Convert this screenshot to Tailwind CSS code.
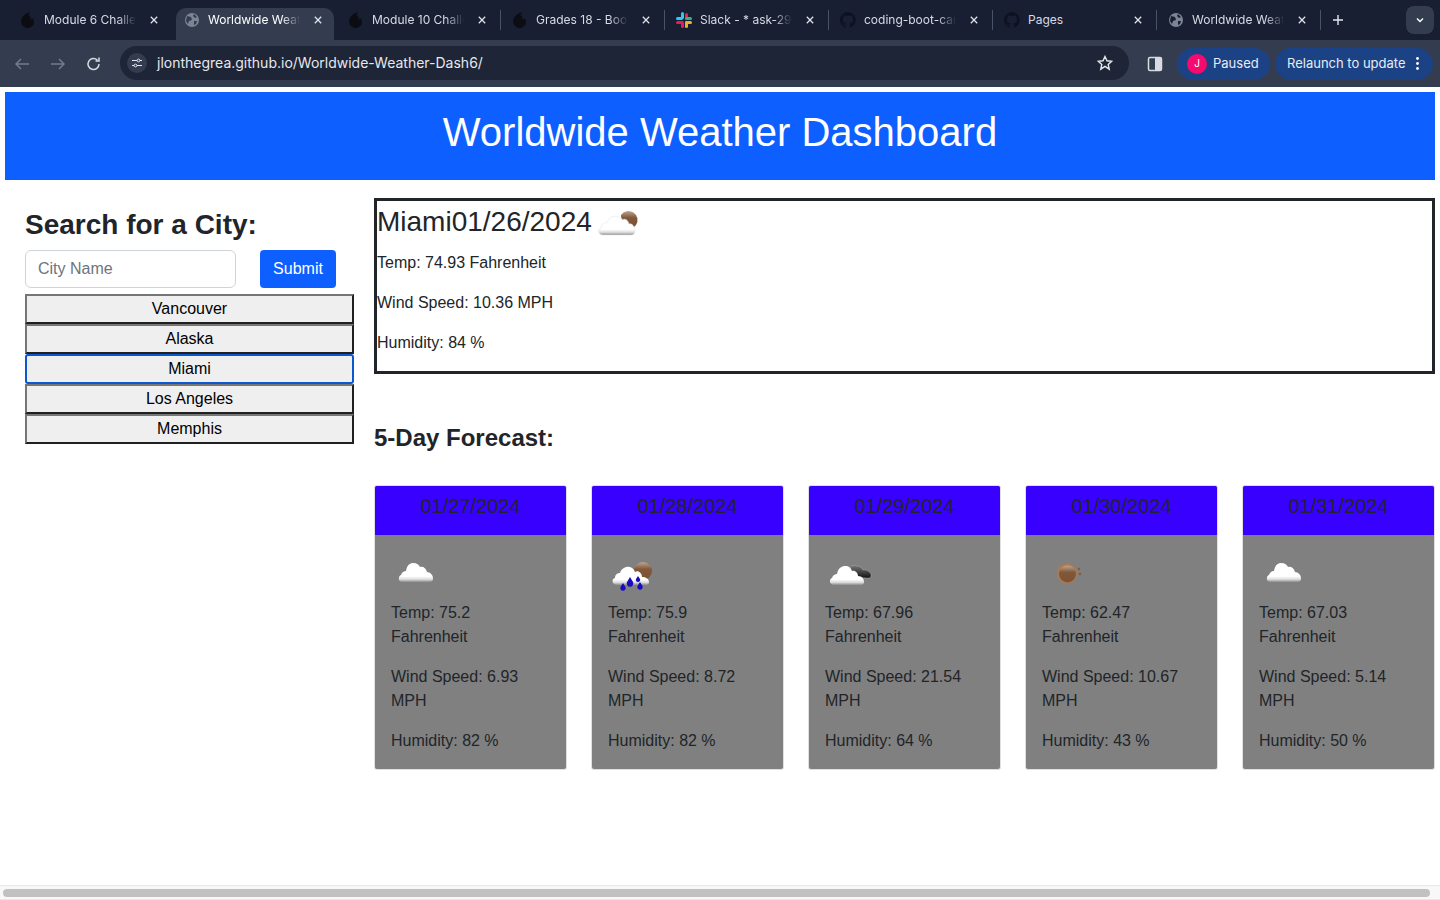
<!DOCTYPE html>
<html lang="en">
<head>
<meta charset="utf-8">
<title>Worldwide Weather Dashboard</title>
<script src="https://cdn.jsdelivr.net/npm/@tailwindcss/browser@4"></script>
</head>
<body class="bg-white h-screen overflow-hidden font-['Liberation_Sans',Arial,sans-serif] text-[#212529] text-base">
<svg class="absolute w-0 h-0" aria-hidden="true">
  <defs>
    <linearGradient id="cl" x1="0" y1="0" x2="0" y2="1"><stop offset="0" stop-color="#fff"/><stop offset=".7" stop-color="#fff"/><stop offset=".86" stop-color="#dcdcdc"/><stop offset="1" stop-color="#8d8d8d"/></linearGradient>
    <linearGradient id="sn" x1="0" y1="0" x2="0" y2="1"><stop offset="0" stop-color="#c0a58e"/><stop offset=".4" stop-color="#80583a"/><stop offset="1" stop-color="#7c5232"/></linearGradient>
    <linearGradient id="dk" x1="0" y1="0" x2="0" y2="1"><stop offset="0" stop-color="#777"/><stop offset=".6" stop-color="#3c3c3c"/><stop offset="1" stop-color="#111"/></linearGradient>
    <symbol id="cloud" viewBox="0 0 50 50"><path fill="url(#cl)" d="M11 31C7 31 7 25 10 24C11 21 13 20 15 20C16 14 19 12 22 12C26 12 28 14 29 16C32 15 35 17 36 21C39 21 42 24 42 27C42 30 41 31 38 31Z"/></symbol>
    <symbol id="ucf" viewBox="0 0 16 16"><path fill="#0b0d12" d="M10 0C6 1 2 4 1 9c0 3 2 6 6 7 3 0 7-2 7-6 0-2-1-3-2-4l-1 2-1-2 1-2-2 1 1-2-2 1Z"/></symbol>
    <symbol id="gh" viewBox="0 0 16 16"><path fill="#0e1220" d="M8 0a8 8 0 0 0-2.500 15.600c.4.100.5-.2.5-.4v-1.400c-2.200.5-2.700-1-2.700-1-.4-.9-.9-1.200-.9-1.200-.7-.5.1-.5.1-.5.8.1 1.200.8 1.200.8.7 1.200 1.900.9 2.300.7.1-.5.3-.9.5-1.100-1.800-.2-3.600-.9-3.600-4 0-.9.3-1.600.8-2.100-.1-.2-.4-1 .1-2.100 0 0 .7-.2 2.200.8a7.600 7.600 0 0 1 4 0c1.500-1 2.200-.8 2.200-.8.4 1.100.2 1.900.1 2.100.5.6.8 1.300.8 2.100 0 3.100-1.900 3.700-3.600 3.900.3.3.5.8.5 1.500v2.200c0 .2.1.5.5.4A8 8 0 0 0 8 0Z"/></symbol>
    <symbol id="x" viewBox="0 0 8 8"><path d="M.8.800l6.400 6.400M7.200.800L.8 7.200" stroke="#dfe2e8" stroke-width="1.300"/></symbol>
  </defs>
</svg>

<header class="h-[87px] bg-[#343c50] font-['Inter',sans-serif] text-white">
  <div class="h-10 bg-[#181f33] flex items-end pl-2 relative">
    <div class="w-[164px] h-8 pb-2 flex items-center pl-3 pr-[14px] shrink-0 text-xs text-[#d7dbe3]">
      <svg class="w-4 h-4 shrink-0 mr-2"><use href="#ucf"/></svg>
      <span class="w-[92px] overflow-hidden whitespace-nowrap [mask-image:linear-gradient(to_right,black_80%,transparent)]">Module 6 Challenge</span>
      <svg class="ml-auto w-2 h-2"><use href="#x"/></svg>
    </div>
    <div class="w-[158px] h-8 pb-2 ml-[4px] mr-[2px] flex items-center pl-2 pr-[12px] shrink-0 text-xs text-white bg-[#343c50] rounded-t-[10px]">
      <svg class="w-4 h-4 shrink-0 mr-2" viewBox="0 0 16 16"><circle cx="8" cy="8" r="7" fill="#7d8493"/><path fill="#343c50" d="M3 4l4 1 1 3-3 1-1 3-2-3ZM10 2l3 3-2 1-2-2ZM10 9l3 0-1 3-2 1Z"/></svg>
      <span class="w-[92px] overflow-hidden whitespace-nowrap [mask-image:linear-gradient(to_right,black_80%,transparent)]">Worldwide Weather</span>
      <svg class="ml-auto w-2 h-2"><use href="#x"/></svg>
    </div>
    <div class="w-[164px] h-8 pb-2 flex items-center pl-3 pr-[14px] shrink-0 text-xs text-[#d7dbe3]">
      <svg class="w-4 h-4 shrink-0 mr-2"><use href="#ucf"/></svg>
      <span class="w-[92px] overflow-hidden whitespace-nowrap [mask-image:linear-gradient(to_right,black_80%,transparent)]">Module 10 Challenge</span>
      <svg class="ml-auto w-2 h-2"><use href="#x"/></svg>
    </div>
    <div class="w-[164px] h-8 pb-2 flex items-center pl-3 pr-[14px] shrink-0 text-xs text-[#d7dbe3] relative before:absolute before:left-0 before:top-[2px] before:h-5 before:w-px before:bg-[#4a5266]">
      <svg class="w-4 h-4 shrink-0 mr-2"><use href="#ucf"/></svg>
      <span class="w-[92px] overflow-hidden whitespace-nowrap [mask-image:linear-gradient(to_right,black_80%,transparent)]">Grades 18 - Boot</span>
      <svg class="ml-auto w-2 h-2"><use href="#x"/></svg>
    </div>
    <div class="w-[164px] h-8 pb-2 flex items-center pl-3 pr-[14px] shrink-0 text-xs text-[#d7dbe3] relative before:absolute before:left-0 before:top-[2px] before:h-5 before:w-px before:bg-[#4a5266]">
      <svg class="w-4 h-4 shrink-0 mr-2" viewBox="0 0 16 16"><rect x="5" y="0" width="3" height="7" rx="1.500" fill="#36c5f0"/><rect x="0" y="5" width="7" height="3" rx="1.500" fill="#36c5f0"/><rect x="9" y="1" width="3" height="7" rx="1.500" fill="#f01e4a"/><rect x="9" y="5" width="7" height="3" rx="1.500" fill="#2eb67d"/><rect x="9" y="9" width="3" height="7" rx="1.500" fill="#ecb22e"/><rect x="9" y="9" width="7" height="3" rx="1.500" fill="#ecb22e"/><rect x="5" y="9" width="3" height="7" rx="1.500" fill="#e01e5a"/><rect x="0" y="9" width="7" height="3" rx="1.500" fill="#e01e5a"/></svg>
      <span class="w-[92px] overflow-hidden whitespace-nowrap [mask-image:linear-gradient(to_right,black_80%,transparent)]">Slack - * ask-29 -</span>
      <svg class="ml-auto w-2 h-2"><use href="#x"/></svg>
    </div>
    <div class="w-[164px] h-8 pb-2 flex items-center pl-3 pr-[14px] shrink-0 text-xs text-[#d7dbe3] relative before:absolute before:left-0 before:top-[2px] before:h-5 before:w-px before:bg-[#4a5266]">
      <svg class="w-4 h-4 shrink-0 mr-2"><use href="#gh"/></svg>
      <span class="w-[92px] overflow-hidden whitespace-nowrap [mask-image:linear-gradient(to_right,black_80%,transparent)]">coding-boot-camp</span>
      <svg class="ml-auto w-2 h-2"><use href="#x"/></svg>
    </div>
    <div class="w-[164px] h-8 pb-2 flex items-center pl-3 pr-[14px] shrink-0 text-xs text-[#d7dbe3] relative before:absolute before:left-0 before:top-[2px] before:h-5 before:w-px before:bg-[#4a5266]">
      <svg class="w-4 h-4 shrink-0 mr-2"><use href="#gh"/></svg>
      <span class="w-[92px] overflow-hidden whitespace-nowrap">Pages</span>
      <svg class="ml-auto w-2 h-2"><use href="#x"/></svg>
    </div>
    <div class="w-[164px] h-8 pb-2 flex items-center pl-3 pr-[14px] shrink-0 text-xs text-[#d7dbe3] relative before:absolute before:left-0 before:top-[2px] before:h-5 before:w-px before:bg-[#4a5266]">
      <svg class="w-4 h-4 shrink-0 mr-2" viewBox="0 0 16 16"><circle cx="8" cy="8" r="7" fill="#7d8493"/><path fill="#181f33" d="M3 4l4 1 1 3-3 1-1 3-2-3ZM10 2l3 3-2 1-2-2ZM10 9l3 0-1 3-2 1Z"/></svg>
      <span class="w-[92px] overflow-hidden whitespace-nowrap [mask-image:linear-gradient(to_right,black_80%,transparent)]">Worldwide Weather</span>
      <svg class="ml-auto w-2 h-2"><use href="#x"/></svg>
    </div>
    <div class="h-8 pb-2 w-9 flex items-center justify-center relative before:absolute before:left-0 before:top-[2px] before:h-5 before:w-px before:bg-[#4a5266]">
      <svg class="w-3 h-3" viewBox="0 0 12 12"><path d="M6 1v10M1 6h10" stroke="#e3e6ec" stroke-width="1.400"/></svg>
    </div>
    <div class="ml-auto mr-[6px] mb-[6px] w-7 h-7 rounded-lg bg-[#343c50] flex items-center justify-center">
      <svg class="w-2.5 h-2.5" viewBox="0 0 10 10"><path d="M2 3.500l3 3 3-3" fill="none" stroke="#fff" stroke-width="1.400"/></svg>
    </div>
  </div>
  <div class="h-[47px] flex items-center pl-[5px] pr-[7px]">
    <svg class="w-[34px] h-4" viewBox="0 0 34 16"><path d="M24 8H11M16 3l-5 5 5 5" fill="none" stroke="#727a8c" stroke-width="1.500"/></svg>
    <svg class="w-[34px] h-4 ml-[2px]" viewBox="0 0 34 16"><path d="M10 8h13M18 3l5 5-5 5" fill="none" stroke="#727a8c" stroke-width="1.500"/></svg>
    <svg class="w-[36px] h-4 ml-px" viewBox="0 0 36 16"><path d="M23 8a5.500 5.500 0 1 1-1.700-4M23 1.500V5h-3.500" fill="none" stroke="#d8dbe2" stroke-width="1.500"/></svg>
    <div class="ml-[8px] w-[1009px] h-[34px] rounded-full bg-[#1d2536] flex items-center pl-[7px] pr-[16px] -mt-px">
      <span class="w-5 h-5 rounded-full bg-[#343c50] flex items-center justify-center shrink-0">
        <svg class="w-3 h-3" viewBox="0 0 12 12"><path d="M1 3.500h5M9 3.500h2M1 8.500h2M6 8.500h5" stroke="#e6e8ee" stroke-width="1.100"/><circle cx="7.500" cy="3.500" r="1.400" fill="none" stroke="#e6e8ee"/><circle cx="4.500" cy="8.500" r="1.400" fill="none" stroke="#e6e8ee"/></svg>
      </span>
      <span class="ml-[10px] text-sm text-[#e6e8ee]">jlonthegrea.github.io/Worldwide-Weather-Dash6/</span>
      <svg class="ml-auto w-4 h-4" viewBox="0 0 16 16"><path d="M8 1.500l2 4.300 4.700.5-3.500 3.200 1 4.600L8 11.300l-4.200 2.800 1-4.600L1.300 6.300 6 5.800Z" fill="none" stroke="#e6e8ee" stroke-width="1.400"/></svg>
    </div>
    <svg class="ml-[18px] w-4 h-4" viewBox="0 0 16 16"><rect x="1.500" y="1.500" width="13" height="13" rx="1.500" fill="none" stroke="#d8dbe2" stroke-width="1.500"/><rect x="8" y="2" width="6" height="12" fill="#d8dbe2"/></svg>
    <div class="ml-[14px] w-[93px] h-8 rounded-full bg-[#1b4284] flex items-center pl-[10px] text-[13px] text-[#e6ecf7]">
      <span class="w-5 h-5 rounded-full bg-[#f50a6e] flex items-center justify-center text-[10px] text-white mr-[6px]">J</span>Paused
    </div>
    <div class="ml-[5px] w-[158px] h-8 rounded-full bg-[#1b4284] flex items-center pl-3 text-[13px] text-[#e6ecf7] whitespace-nowrap">
      Relaunch to update
      <svg class="ml-[10px] w-[3px] h-[13px]" viewBox="0 0 3 13"><circle cx="1.500" cy="1.500" r="1.400" fill="#fff"/><circle cx="1.500" cy="6.500" r="1.400" fill="#fff"/><circle cx="1.500" cy="11.500" r="1.400" fill="#fff"/></svg>
    </div>
  </div>
</header>

<div class="h-[798px] px-[5px] pt-[5px] relative">
  <div class="h-[88px] pb-2 bg-[#0d60ff] flex items-center justify-center">
    <h1 class="text-[40px] leading-[48px] text-white">Worldwide Weather Dashboard</h1>
  </div>

  <main class="flex mt-[18px] gap-5">
    <aside class="w-[349px] shrink-0 pl-5 pt-[10px]">
      <h2 class="text-[28px] leading-[34px] font-bold mb-2">Search for a City:</h2>
      <form class="flex gap-6">
        <input class="w-[211px] h-[38px] px-3 border border-[#ced4da] rounded-md text-base placeholder:text-[#6c757d]" placeholder="City Name">
        <button type="button" class="w-[76px] h-[38px] rounded-[4px] bg-[#0d60ff] text-white text-base">Submit</button>
      </form>
      <div class="mt-[6px] flex flex-col">
        <button class="h-[30px] bg-[#efefef] border-2 border-t-[#767676] border-l-[#767676] border-r-[#202020] border-b-[#202020] text-black">Vancouver</button>
        <button class="h-[30px] bg-[#efefef] border-2 border-t-[#767676] border-l-[#767676] border-r-[#202020] border-b-[#202020] text-black">Alaska</button>
        <button class="h-[30px] bg-[#efefef] border-2 border-[#0b57d0] rounded-[3px] text-black">Miami</button>
        <button class="h-[30px] bg-[#efefef] border-2 border-t-[#767676] border-l-[#767676] border-r-[#202020] border-b-[#202020] text-black">Los Angeles</button>
        <button class="h-[30px] bg-[#efefef] border-2 border-t-[#767676] border-l-[#767676] border-r-[#202020] border-b-[#202020] text-black">Memphis</button>
      </div>
    </aside>

    <section class="w-[1061px]">
      <div class="h-[176px] border-[3px] border-[#212529]">
        <div class="flex h-[50px] pt-px">
          <h2 class="text-[28px] leading-[40px] whitespace-nowrap">Miami01/26/2024</h2>
          <svg class="w-[50px] h-[50px] -mt-[1px] ml-[2px]" viewBox="0 0 50 50">
            <path fill="url(#sn)" d="M27 14a9 9 0 0 1 15 10l-3 3-9-5-3-6Z"/>
            <path fill="url(#cl)" stroke="#e4e4e4" stroke-width=".6" d="M9 34C4 34 3 28 7 27C7 23 11 21 13 22C15 14 24 13 28 19C31 17 34 19 35 23C38 22 41 26 41 30C41 33 39 34 37 34Z"/>
          </svg>
        </div>
        <p class="leading-6 mb-4">Temp: 74.93 Fahrenheit</p>
        <p class="leading-6 mb-4">Wind Speed: 10.36 MPH</p>
        <p class="leading-6">Humidity: 84 %</p>
      </div>

      <h3 class="mt-[49px] text-2xl leading-[29px] font-bold">5-Day Forecast:</h3>

      <div class="flex gap-6 mt-[33px]">
        <article class="w-[193px] h-[285px] border border-[#e0e0e0] rounded-[3px] overflow-hidden bg-[#808080]">
          <div class="h-[49px] bg-[#3700ff] pt-2 text-center text-xl leading-6">01/27/2024</div>
          <div class="px-4 pt-4">
            <svg class="w-[50px] h-[50px]" viewBox="0 0 50 50"><use href="#cloud" width="50" height="50"/></svg>
            <p class="leading-6 mb-4">Temp: 75.2 Fahrenheit</p>
            <p class="leading-6 mb-4">Wind Speed: 6.93 MPH</p>
            <p class="leading-6">Humidity: 82 %</p>
          </div>
        </article>
        <article class="w-[193px] h-[285px] border border-[#e0e0e0] rounded-[3px] overflow-hidden bg-[#808080]">
          <div class="h-[49px] bg-[#3700ff] pt-2 text-center text-xl leading-6">01/28/2024</div>
          <div class="px-4 pt-4">
            <svg class="w-[50px] h-[50px]" viewBox="0 0 50 50">
              <circle cx="35" cy="20" r="9" fill="url(#sn)"/>
              <path fill="url(#cl)" d="M9 34C4 34 3 28 7 27C7 23 10 22 12 22C14 15 24 13 27 21C30 19 34 22 34 26C38 26 41 28 41 31C41 33 40 34 38 34Z"/>
              <path fill="#1a0ac0" d="M15 32l2.500 4a2.700 2.700 0 1 1-5 0ZM22 26l3 5a3.300 3.300 0 1 1-6 0ZM30 25l2 3a2.200 2.200 0 1 1-4 0ZM32 31l2.500 4a2.700 2.700 0 1 1-5 0Z"/>
            </svg>
            <p class="leading-6 mb-4">Temp: 75.9 Fahrenheit</p>
            <p class="leading-6 mb-4">Wind Speed: 8.72 MPH</p>
            <p class="leading-6">Humidity: 82 %</p>
          </div>
        </article>
        <article class="w-[193px] h-[285px] border border-[#e0e0e0] rounded-[3px] overflow-hidden bg-[#808080]">
          <div class="h-[49px] bg-[#3700ff] pt-2 text-center text-xl leading-6">01/29/2024</div>
          <div class="px-4 pt-4">
            <svg class="w-[50px] h-[50px]" viewBox="0 0 50 50">
              <path fill="url(#dk)" stroke="#bbb" stroke-width=".4" d="M24 21C24 16 28 13 32 15C35 15 37 17 38 19C42 18 47 22 46 25C46 27 44 27 42 27L29 26Z"/>
              <path fill="url(#cl)" d="M9 34C4 34 4 28 7 27C8 24 10 23 12 23C13 17 17 15 20 15C24 15 26 17 27 20C30 19 33 22 33 25C37 25 39 28 39 31C39 33 38 34 36 34Z"/>
            </svg>
            <p class="leading-6 mb-4">Temp: 67.96 Fahrenheit</p>
            <p class="leading-6 mb-4">Wind Speed: 21.54 MPH</p>
            <p class="leading-6">Humidity: 64 %</p>
          </div>
        </article>
        <article class="w-[193px] h-[285px] border border-[#e0e0e0] rounded-[3px] overflow-hidden bg-[#808080]">
          <div class="h-[49px] bg-[#3700ff] pt-2 text-center text-xl leading-6">01/30/2024</div>
          <div class="px-4 pt-4">
            <svg class="w-[50px] h-[50px]" viewBox="0 0 50 50">
              <circle cx="25" cy="22.500" r="10" fill="#b07a50"/>
              <circle cx="25.500" cy="23" r="8.500" fill="url(#sn)"/>
              <circle cx="37" cy="18" r="1.300" fill="#8a5a38"/>
              <circle cx="38" cy="23" r="1.300" fill="#8a5a38"/>
            </svg>
            <p class="leading-6 mb-4">Temp: 62.47 Fahrenheit</p>
            <p class="leading-6 mb-4">Wind Speed: 10.67 MPH</p>
            <p class="leading-6">Humidity: 43 %</p>
          </div>
        </article>
        <article class="w-[193px] h-[285px] border border-[#e0e0e0] rounded-[3px] overflow-hidden bg-[#808080]">
          <div class="h-[49px] bg-[#3700ff] pt-2 text-center text-xl leading-6">01/31/2024</div>
          <div class="px-4 pt-4">
            <svg class="w-[50px] h-[50px]" viewBox="0 0 50 50"><use href="#cloud" width="50" height="50"/></svg>
            <p class="leading-6 mb-4">Temp: 67.03 Fahrenheit</p>
            <p class="leading-6 mb-4">Wind Speed: 5.14 MPH</p>
            <p class="leading-6">Humidity: 50 %</p>
          </div>
        </article>
      </div>
    </section>
  </main>
</div>

<div class="h-[15px] bg-[#f8f8f8] border-y border-[#e8e8e8] px-[3px] pt-[3px]">
  <div class="h-2 w-[1427px] rounded-full bg-[#c1c1c1]"></div>
</div>
</body>
</html>
